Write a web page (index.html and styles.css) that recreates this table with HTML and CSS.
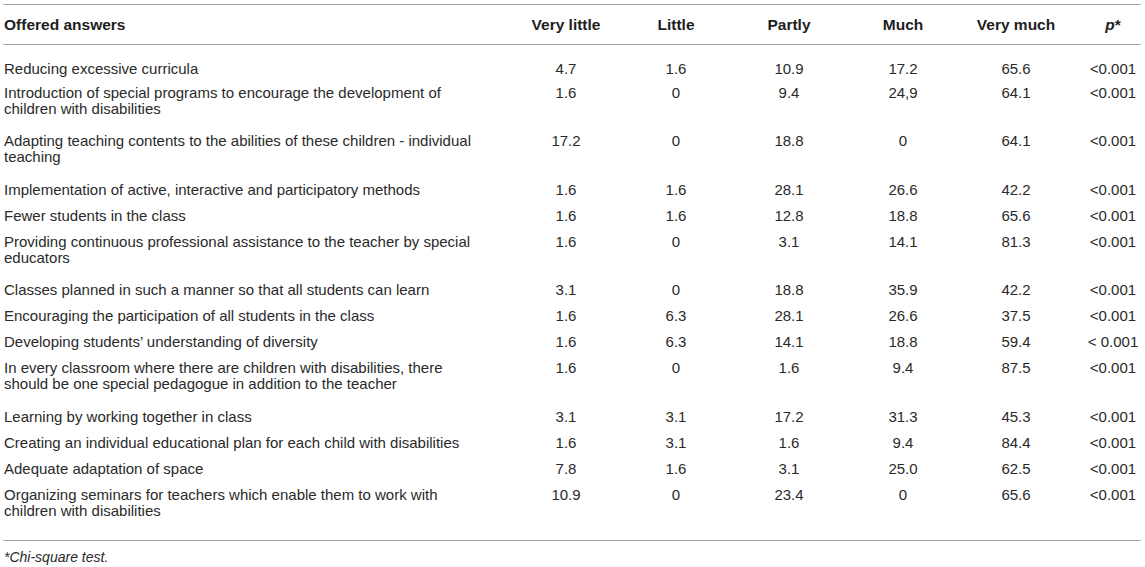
FILE: index.html
```html
<!DOCTYPE html>
<html lang="en">
<head>
<meta charset="utf-8">
<title>Table</title>
<link rel="stylesheet" href="styles.css">
</head>
<body>
<div class="wrap">
<table class="tbl">
<colgroup>
<col class="c-ans"><col class="c-vl"><col class="c-l"><col class="c-p"><col class="c-m"><col class="c-vm"><col class="c-pv">
</colgroup>
<thead>
<tr>
<th class="ans">Offered answers</th>
<th>Very little</th>
<th>Little</th>
<th>Partly</th>
<th>Much</th>
<th>Very much</th>
<th class="pv"><i>p</i>*</th>
</tr>
</thead>
<tbody>
<tr class="first"><td class="ans">Reducing excessive curricula</td><td>4.7</td><td>1.6</td><td>10.9</td><td>17.2</td><td>65.6</td><td class="pv">&lt;0.001</td></tr>
<tr class="two"><td class="ans">Introduction of special programs to encourage the development of children with disabilities</td><td>1.6</td><td>0</td><td>9.4</td><td>24,9</td><td>64.1</td><td class="pv">&lt;0.001</td></tr>
<tr class="two"><td class="ans">Adapting teaching contents to the abilities of these children - individual teaching</td><td>17.2</td><td>0</td><td>18.8</td><td>0</td><td>64.1</td><td class="pv">&lt;0.001</td></tr>
<tr><td class="ans">Implementation of active, interactive and participatory methods</td><td>1.6</td><td>1.6</td><td>28.1</td><td>26.6</td><td>42.2</td><td class="pv">&lt;0.001</td></tr>
<tr><td class="ans">Fewer students in the class</td><td>1.6</td><td>1.6</td><td>12.8</td><td>18.8</td><td>65.6</td><td class="pv">&lt;0.001</td></tr>
<tr class="two"><td class="ans">Providing continuous professional assistance to the teacher by special educators</td><td>1.6</td><td>0</td><td>3.1</td><td>14.1</td><td>81.3</td><td class="pv">&lt;0.001</td></tr>
<tr><td class="ans">Classes planned in such a manner so that all students can learn</td><td>3.1</td><td>0</td><td>18.8</td><td>35.9</td><td>42.2</td><td class="pv">&lt;0.001</td></tr>
<tr><td class="ans">Encouraging the participation of all students in the class</td><td>1.6</td><td>6.3</td><td>28.1</td><td>26.6</td><td>37.5</td><td class="pv">&lt;0.001</td></tr>
<tr><td class="ans">Developing students’ understanding of diversity</td><td>1.6</td><td>6.3</td><td>14.1</td><td>18.8</td><td>59.4</td><td class="pv">&lt; 0.001</td></tr>
<tr class="two"><td class="ans">In every classroom where there are children with disabilities, there should be one special pedagogue in addition to the teacher</td><td>1.6</td><td>0</td><td>1.6</td><td>9.4</td><td>87.5</td><td class="pv">&lt;0.001</td></tr>
<tr><td class="ans">Learning by working together in class</td><td>3.1</td><td>3.1</td><td>17.2</td><td>31.3</td><td>45.3</td><td class="pv">&lt;0.001</td></tr>
<tr><td class="ans">Creating an individual educational plan for each child with disabilities</td><td>1.6</td><td>3.1</td><td>1.6</td><td>9.4</td><td>84.4</td><td class="pv">&lt;0.001</td></tr>
<tr><td class="ans">Adequate adaptation of space</td><td>7.8</td><td>1.6</td><td>3.1</td><td>25.0</td><td>62.5</td><td class="pv">&lt;0.001</td></tr>
<tr class="two last"><td class="ans">Organizing seminars for teachers which enable them to work with children with disabilities</td><td>10.9</td><td>0</td><td>23.4</td><td>0</td><td>65.6</td><td class="pv">&lt;0.001</td></tr>
</tbody>
</table>
<p class="note"><i>*Chi-square test.</i></p>
</div>
</body>
</html>
```
FILE: styles.css
```css
html, body {
  margin: 0;
  padding: 0;
  background: #ffffff;
}
body {
  font-family: "Liberation Sans", Arial, Helvetica, sans-serif;
  color: #2a2a2a;
}
.wrap {
  padding: 4px 4px 0 3px;
}
.tbl {
  width: 1138px;
  table-layout: fixed;
  border-collapse: collapse;
  font-size: 15px;
  line-height: 16px;
}
.c-ans { width: 508px; }
.c-vl { width: 110px; }
.c-l { width: 110px; }
.c-p { width: 116px; }
.c-m { width: 112px; }
.c-vm { width: 114px; }
.c-pv { width: 68px; }

.tbl th {
  font-weight: bold;
  font-size: 15.5px;
  text-align: center;
  height: 39px;
  padding: 0;
  border-top: 1px solid #a8a8a8;
  border-bottom: 1px solid #a8a8a8;
  vertical-align: middle;
  color: #1e1e1e;
}
.tbl td {
  text-align: center;
  vertical-align: top;
  padding: 4.5px 0 5.5px 0;
}
.tbl .ans {
  text-align: left;
  padding-left: 1px;
  padding-right: 25px;
}
.tbl .pv {
  padding-left: 12px;
  padding-right: 0;
}
.tbl tr.two td {
  padding-bottom: 12px;
}
.tbl tr.first td {
  padding-top: 16px;
  padding-bottom: 3px;
}
.tbl tr.last td {
  padding-top: 5px;
  padding-bottom: 20.5px;
  border-bottom: 1px solid #a8a8a8;
}
.note {
  margin: 8.5px 0 0 1px;
  font-size: 14px;
  line-height: 17px;
}
```
